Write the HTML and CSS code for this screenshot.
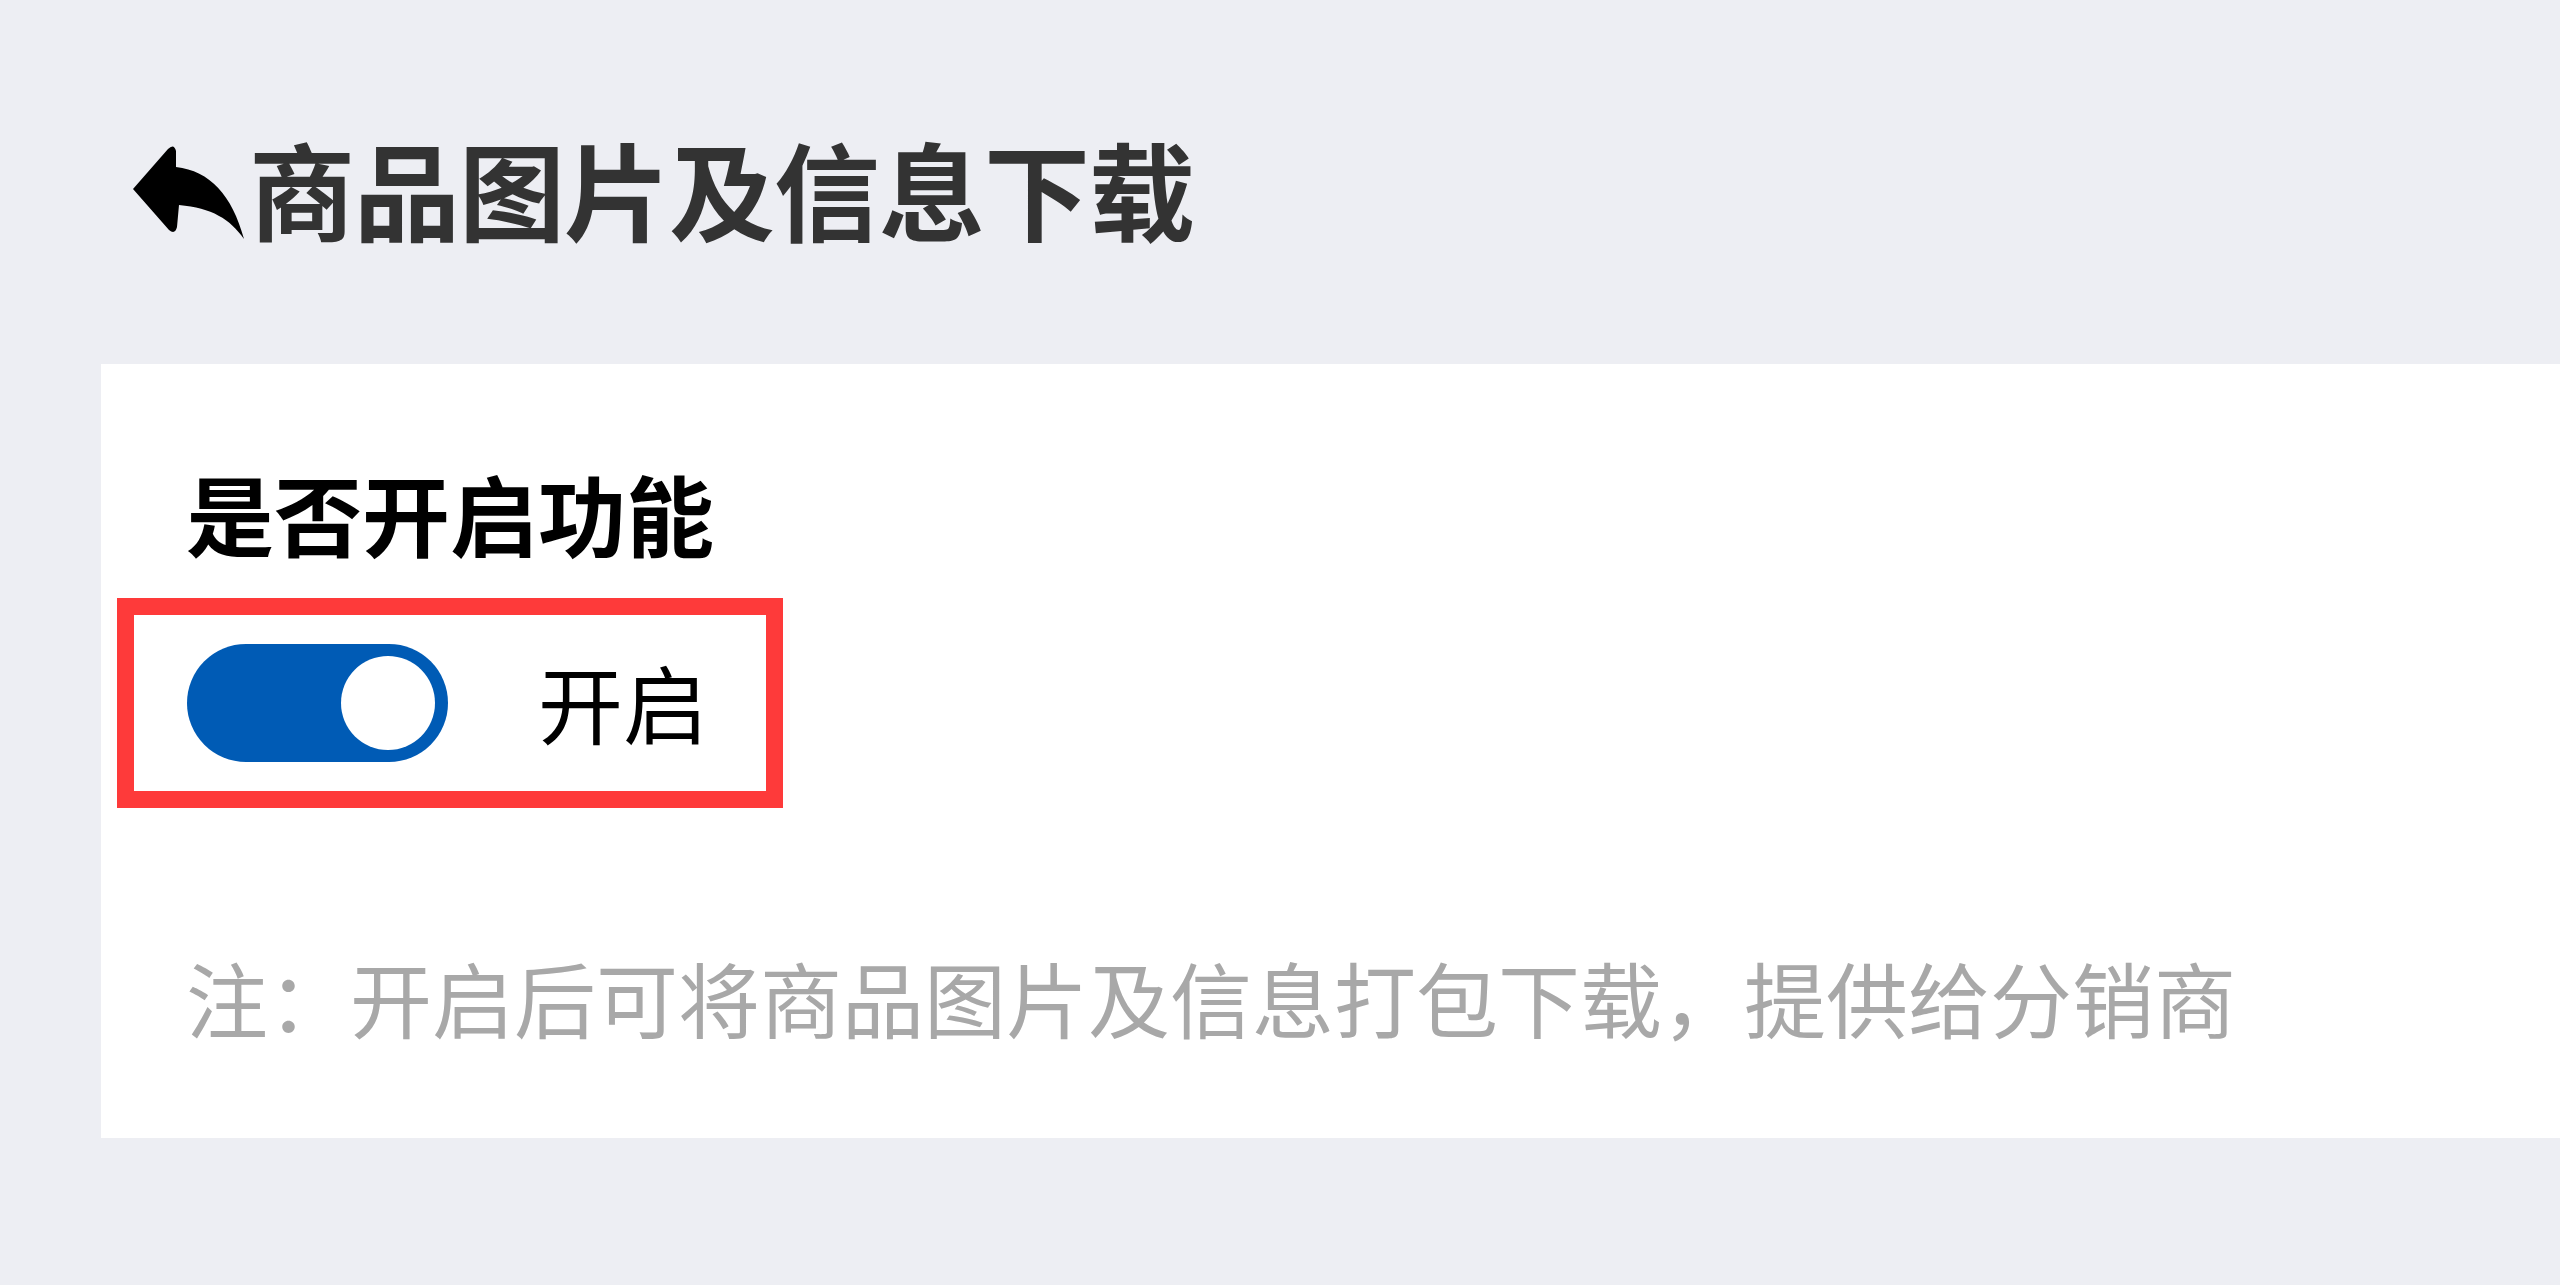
FILE: index.html
```html
<!DOCTYPE html>
<html lang="zh-CN">
<head>
<meta charset="utf-8">
<title>商品图片及信息下载</title>
<link rel="stylesheet" href="styles.css">
</head>
<body>
<div class="page">
  <header class="header">
    <svg class="back" viewBox="0 0 116 98" aria-hidden="true">
      <path d="M3 46 L38 6 Q44 0 46 8 L46 24 C80 28 102 52 114 96 C100 76 82 65 49 62 L47 84 Q45 92 39 87 Z"/>
    </svg>
    <h1 class="title">商品图片及信息下载</h1>
  </header>
  <section class="card">
    <div class="label">是否开启功能</div>
    <div class="switch-row">
      <span class="switch"><span class="knob"></span></span>
      <span class="switch-text">开启</span>
    </div>
    <p class="note">注：开启后可将商品图片及信息打包下载，提供给分销商</p>
  </section>
</div>
</body>
</html>
```
FILE: styles.css
```css
html, body {
  margin: 0;
  padding: 0;
  background: #edeef3;
}
body {
  font-family: "Noto Sans CJK SC", "Noto Sans", sans-serif;
  overflow: hidden;
}
.page {
  display: flex;
  flex-direction: column;
  padding-top: 134px;
}
.header {
  display: flex;
  align-items: center;
  gap: 3px;
  padding-left: 130px;
  height: 106px;
}
.back {
  width: 116px;
  height: 98px;
  flex: none;
  fill: #000;
  margin-top: 10px;
}
.title {
  margin: 0;
  font-size: 106px;
  line-height: 1;
  font-weight: 700;
  color: #333;
  letter-spacing: -1px;
}
.card {
  margin-top: 124px;
  margin-left: 101px;
  background: #fff;
  height: 774px;
  box-sizing: border-box;
  padding: 104px 0 0 0;
  display: flex;
  flex-direction: column;
  align-items: flex-start;
}
.label {
  margin-left: 85px;
  font-size: 88px;
  line-height: 1;
  font-weight: 700;
  color: #000;
}
.switch-row {
  margin-top: 42px;
  margin-left: 16px;
  border: 17px solid #fe3a3a;
  padding: 29px 58px 29px 53px;
  display: flex;
  align-items: center;
  gap: 90px;
}
.switch {
  width: 261px;
  height: 118px;
  border-radius: 59px;
  background: #005bb5;
  display: flex;
  align-items: center;
  justify-content: flex-end;
  padding-right: 13px;
  box-sizing: border-box;
}
.knob {
  width: 94px;
  height: 94px;
  border-radius: 50%;
  background: #fff;
}
.switch-text {
  font-size: 85px;
  line-height: 1;
  color: #000;
  margin-top: -6px;
}
.note {
  margin: 148px 0 0 85px;
  font-size: 82px;
  line-height: 1;
  color: #a8a8a8;
}
```
